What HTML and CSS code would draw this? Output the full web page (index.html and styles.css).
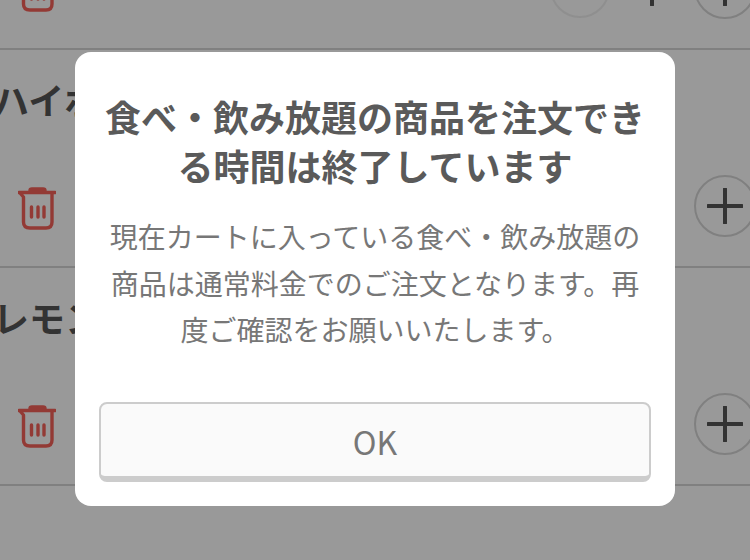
FILE: index.html
```html
<!DOCTYPE html>
<html lang="ja">
<head>
<meta charset="utf-8">
<title>注文</title>
<link rel="stylesheet" href="styles.css">
</head>
<body>
<div class="cart">
  <section class="row row-first">
    <div class="controls">
      <svg class="trash" viewBox="0 0 38 44" aria-hidden="true"><use href="#trash-icon"/></svg>
      <div class="qty">
        <span class="circle circle-faint"></span>
        <svg class="plus-bare" viewBox="0 0 36 36" aria-hidden="true"><path d="M18 1V35M1 18H35"/></svg>
        <span class="circle"><svg class="plus" viewBox="0 0 36 36" aria-hidden="true"><path d="M18 1V35M1 18H35"/></svg></span>
      </div>
    </div>
  </section>
  <section class="row">
    <h2 class="name">ハイボール</h2>
    <div class="controls">
      <svg class="trash" viewBox="0 0 38 44" aria-hidden="true"><use href="#trash-icon"/></svg>
      <div class="qty"><span class="circle"><svg class="plus" viewBox="0 0 36 36" aria-hidden="true"><path d="M18 1V35M1 18H35"/></svg></span></div>
    </div>
  </section>
  <section class="row">
    <h2 class="name">レモンサワー</h2>
    <div class="controls">
      <svg class="trash" viewBox="0 0 38 44" aria-hidden="true"><use href="#trash-icon"/></svg>
      <div class="qty"><span class="circle"><svg class="plus" viewBox="0 0 36 36" aria-hidden="true"><path d="M18 1V35M1 18H35"/></svg></span></div>
    </div>
  </section>
</div>
<svg class="defs" aria-hidden="true">
  <symbol id="trash-icon" viewBox="0 0 38 44">
    <path d="M1 5.5H37M12 5V3.5Q12 2 14 2H25Q27 2 27 3.5V5M2 6L5.5 10V35C5.5 39 8 41 12 41H28C32 41 34 39 34 35V6" fill="none" stroke="#933a35" stroke-width="3.4" stroke-linecap="round" stroke-linejoin="round"/>
    <path d="M13.5 20V30M20 20V30M26 20V30" fill="none" stroke="#933a35" stroke-width="3.4" stroke-linecap="round"/>
  </symbol>
</svg>
<div class="overlay">
  <div class="modal">
    <h1 class="modal-title">食べ・飲み放題の商品を注文できる時間は終了しています</h1>
    <p class="modal-text">現在カートに入っている食べ・飲み放題の商品は通常料金でのご注文となります。再度ご確認をお願いいたします。</p>
    <button class="ok" type="button">OK</button>
  </div>
</div>
</body>
</html>
```
FILE: styles.css
```css
* { box-sizing: border-box; }
html, body { margin: 0; height: 100%; }
body {
  position: relative;
  overflow: hidden;
  background: #999;
  font-family: "Noto Sans CJK JP", "Liberation Sans", sans-serif;
}
.cart { margin-top: -168px; }
.row {
  height: 218px;
  border-bottom: 2px solid #808080;
  padding-top: 26px;
  display: flex;
  flex-direction: column;
}
.name {
  margin: 0 0 0 -7px;
  font-size: 36px;
  line-height: 46px;
  font-weight: 700;
  color: #333;
  white-space: nowrap;
}
.controls {
  margin-top: auto;
  height: 62px;
  margin-bottom: 29px;
  display: flex;
  align-items: center;
  justify-content: space-between;
  padding-left: 18px;
}
.trash { width: 38px; height: 44px; margin-top: 5px; }
.qty { display: flex; align-items: center; margin-right: -6px; }
.circle {
  width: 62px;
  height: 62px;
  border: 2px solid #808080;
  border-radius: 50%;
  display: flex;
  align-items: center;
  justify-content: center;
  flex: none;
}
.circle-faint { border-color: #8f8f8f; width: 60px; height: 60px; margin-right: 24px; }
.plus, .plus-bare { width: 36px; height: 36px; fill: none; stroke: #333; stroke-width: 4; stroke-linecap: round; }
.plus-bare { margin-right: 24px; }
.defs { position: absolute; width: 0; height: 0; }
.overlay {
  position: absolute;
  inset: 0;
  display: flex;
  align-items: flex-start;
  justify-content: center;
  padding-top: 52px;
}
.modal {
  width: 600px;
  height: 454px;
  background: #fff;
  border-radius: 16px;
  padding: 40px 24px 24px;
  display: flex;
  flex-direction: column;
  align-items: stretch;
  text-align: center;
}
.modal-title {
  margin: 0;
  padding: 0 4px;
  font-size: 36px;
  line-height: 49px;
  font-weight: 700;
  color: #5a5a5a;
}
.modal-text {
  margin: 23px 0 0;
  padding: 0 8px;
  font-size: 28px;
  line-height: 46.5px;
  font-weight: 400;
  color: #777;
}
.ok {
  margin-top: auto;
  height: 80px;
  background: #fafafa;
  border: 2px solid #ccc;
  border-bottom-width: 6px;
  border-radius: 8px;
  font-family: "Noto Sans CJK JP", "Liberation Sans", sans-serif;
  font-size: 32px;
  color: #777;
  padding: 2px 0 0;
}
```
